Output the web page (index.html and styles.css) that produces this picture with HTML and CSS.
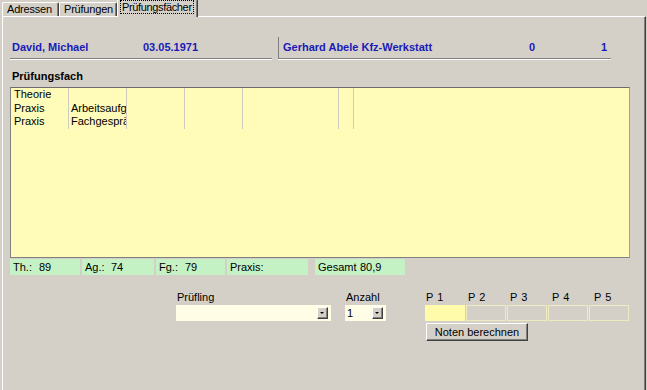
FILE: index.html
```html
<!DOCTYPE html>
<html lang="de">
<head>
    <meta charset="UTF-8">
    <title>Prüfungsfächer</title>
    <link rel="stylesheet" href="styles.css">
</head>
<body>

    <div class="tabs">
        <div class="tab tab-addr">Adressen</div>
        <div class="tab tab-exam">Prüfungen</div>
        <div class="tab tab-subj active"><span class="focus">Prüfungsfächer</span></div>
    </div>

    <div class="panel">
        <!-- Kopfzeile Prüfling / Betrieb -->
        <div class="header">
            <div class="hblock person">
                <span class="name">David, Michael</span><span>03.05.1971</span>
            </div>
            <div class="hblock company">
                <span class="firm">Gerhard Abele Kfz-Werkstatt</span><span class="num0">0</span><span>1</span>
            </div>
        </div>

        <div class="section-title">Prüfungsfach</div>

        <div class="list">
            <div class="row">
                <div class="cell c1">Theorie</div>
                <div class="cell c2"></div>
                <div class="cell c3"></div>
                <div class="cell c4"></div>
                <div class="cell c5"></div>
                <div class="cell c6"></div>
            </div>
            <div class="row">
                <div class="cell c1">Praxis</div>
                <div class="cell c2">Arbeitsaufgabe</div>
                <div class="cell c3"></div>
                <div class="cell c4"></div>
                <div class="cell c5"></div>
                <div class="cell c6"></div>
            </div>
            <div class="row">
                <div class="cell c1">Praxis</div>
                <div class="cell c2">Fachgespräch</div>
                <div class="cell c3"></div>
                <div class="cell c4"></div>
                <div class="cell c5"></div>
                <div class="cell c6"></div>
            </div>
        </div>

        <div class="totals">
            <div class="tcell t-th"><span class="tlabel">Th.:</span>89</div>
            <div class="tcell t-ag"><span class="tlabel">Ag.:</span>74</div>
            <div class="tcell t-fg"><span class="tlabel">Fg.:</span>79</div>
            <div class="tcell t-px">Praxis:</div>
            <div class="tcell t-ges"><span class="tlabel wide">Gesamt</span>80,9</div>
        </div>

        <div class="bottom">
            <div class="field f-pruefling">
                <label>Prüfling</label>
                <div class="combo combo-wide">
                    <span></span>
                    <span class="drop"><span class="arrow"></span></span>
                </div>
            </div>
            <div class="field f-anzahl">
                <label>Anzahl</label>
                <div class="combo combo-small">
                    <span>1</span>
                    <span class="drop"><span class="arrow"></span></span>
                </div>
            </div>
            <div class="field f-points">
                <div class="plabels">
                    <span>P 1</span><span>P 2</span><span>P 3</span><span>P 4</span><span>P 5</span>
                </div>
                <div class="pboxes">
                    <div class="pbox filled"></div>
                    <div class="pbox"></div>
                    <div class="pbox"></div>
                    <div class="pbox"></div>
                    <div class="pbox"></div>
                </div>
                <button class="btn">Noten berechnen</button>
            </div>
        </div>
    </div>

</body>
</html>
```

FILE: styles.css
```css
/* Base */
body {
    margin: 0;
    width: 647px;
    height: 390px;
    overflow: hidden;
    background: #d4d0c8;
    font-family: "Liberation Sans", Arial, sans-serif;
    font-size: 11px;
    color: #000;
}

/* Reiter */
.tabs {
    display: flex;
    align-items: flex-end;
    height: 16px;
    padding-left: 2px;
}

.tab {
    box-sizing: border-box;
    height: 14px;
    line-height: 13px;
    padding-left: 4px;
    border-top: 1px solid #fff;
    border-left: 1px solid #fff;
    border-right: 1px solid #404040;
    box-shadow: inset -1px 0 0 #808080;
    border-radius: 2px 2px 0 0;
    letter-spacing: -0.2px;
    white-space: nowrap;
}

.tab-addr { width: 57px; }
.tab-exam { width: 58px; }

.tab.active {
    position: relative;
    z-index: 1;
    width: 81px;
    height: 18px;
    margin-bottom: -1px;
    padding-top: 1px;
    padding-left: 3px;
    letter-spacing: -0.35px;
    background: #d4d0c8;
}

.focus {
    outline: 1px dotted #000;
    padding: 0 1px;
}

/* Rahmen */
.panel {
    box-sizing: border-box;
    width: 644px;
    height: 374px;
    margin-left: 2px;
    padding: 20px 0 0 7px;
    border-top: 1px solid #fff;
    border-left: 1px solid #fff;
    border-right: 1px solid #404040;
    box-shadow: inset -1px 0 0 #808080;
}

/* Kopfzeile */
.header {
    display: flex;
    gap: 6px;
}

.hblock {
    box-sizing: border-box;
    padding: 4px 0;
    line-height: 13px;
    font-weight: bold;
    color: #1a1ab8;
    border-bottom: 1px solid #808080;
    box-shadow: 0 1px 0 #fff;
    white-space: nowrap;
}

.person {
    width: 262px;
    padding-left: 2px;
}

.name {
    display: inline-block;
    width: 131px;
}

.company {
    width: 333px;
    padding-left: 4px;
    border-left: 1px solid #808080;
}

.firm {
    display: inline-block;
    width: 246px;
}

.num0 {
    display: inline-block;
    width: 72px;
}

.section-title {
    margin-top: 11px;
    padding-left: 2px;
    line-height: 13px;
    font-weight: bold;
}

/* Liste */
.list {
    box-sizing: border-box;
    width: 620px;
    height: 171px;
    margin-top: 4px;
    background: #fffbb9;
    border: 1px solid #808080;
    border-top-color: #6c6c6c;
    border-right-color: #a0a0a0;
}

.row {
    display: flex;
    height: 13.5px;
    line-height: 13.5px;
}

.cell {
    box-sizing: border-box;
    overflow: hidden;
    white-space: nowrap;
    padding-left: 2px;
    border-right: 1px solid #cfcbbf;
}

.c1 { width: 58px; padding-left: 3px; }
.c2, .c3, .c4 { width: 58px; }
.c5 { width: 96px; }
.c6 { width: 15px; }

/* Summen */
.totals {
    display: flex;
    margin-top: 1px;
}

.tcell {
    box-sizing: border-box;
    height: 16px;
    line-height: 16px;
    padding-left: 3px;
    background: #c4f2c4;
    white-space: nowrap;
}

.tlabel {
    display: inline-block;
    width: 26px;
}

.tlabel.wide { width: 42px; }

.t-th { width: 70px; }
.t-ag { width: 72px; margin-left: 2px; }
.t-fg { width: 69px; margin-left: 2px; }
.t-px { width: 81px; margin-left: 2px; }
.t-ges { width: 90px; margin-left: 7px; }

/* Eingabe unten */
.bottom {
    display: flex;
    margin-top: 15px;
    padding-left: 166px;
}

.field label {
    display: block;
    height: 15px;
    line-height: 14px;
    padding-left: 1px;
}

.combo {
    box-sizing: border-box;
    display: flex;
    justify-content: space-between;
    align-items: center;
    height: 16px;
    padding: 0 3px 0 2px;
    background: #fffde6;
}

.combo-wide { width: 155px; }

.f-anzahl { margin-left: 14px; }
.combo-small { width: 41px; }

.drop {
    box-sizing: border-box;
    display: flex;
    justify-content: center;
    align-items: center;
    width: 11px;
    height: 12px;
    background: #d4d0c8;
    border: 1px solid;
    border-color: #fff #404040 #404040 #fff;
    box-shadow: inset -1px -1px 0 #808080;
}

.arrow {
    width: 0;
    height: 0;
    margin: 0 1px 1px 0;
    border-left: 2px solid transparent;
    border-right: 2px solid transparent;
    border-top: 2px solid #000;
}

.f-points { margin-left: 39px; }

.plabels {
    display: flex;
    height: 15px;
    line-height: 14px;
}

.plabels span {
    width: 41px;
    padding-left: 1px;
    word-spacing: 1px;
}

.pboxes {
    display: flex;
    gap: 1px;
}

.pbox {
    box-sizing: border-box;
    width: 40px;
    height: 16px;
    border: 1px solid #efebc0;
}

.pbox.filled {
    background: #fffbaa;
    border-color: #fffbaa;
}

.btn {
    box-sizing: border-box;
    display: block;
    width: 102px;
    height: 18px;
    margin: 2px 0 0 1px;
    padding: 0;
    font-family: "Liberation Sans", Arial, sans-serif;
    font-size: 11px;
    color: #000;
    background: #d4d0c8;
    border: 1px solid;
    border-color: #fff #404040 #404040 #fff;
    box-shadow: inset -1px -1px 0 #808080;
}
```
